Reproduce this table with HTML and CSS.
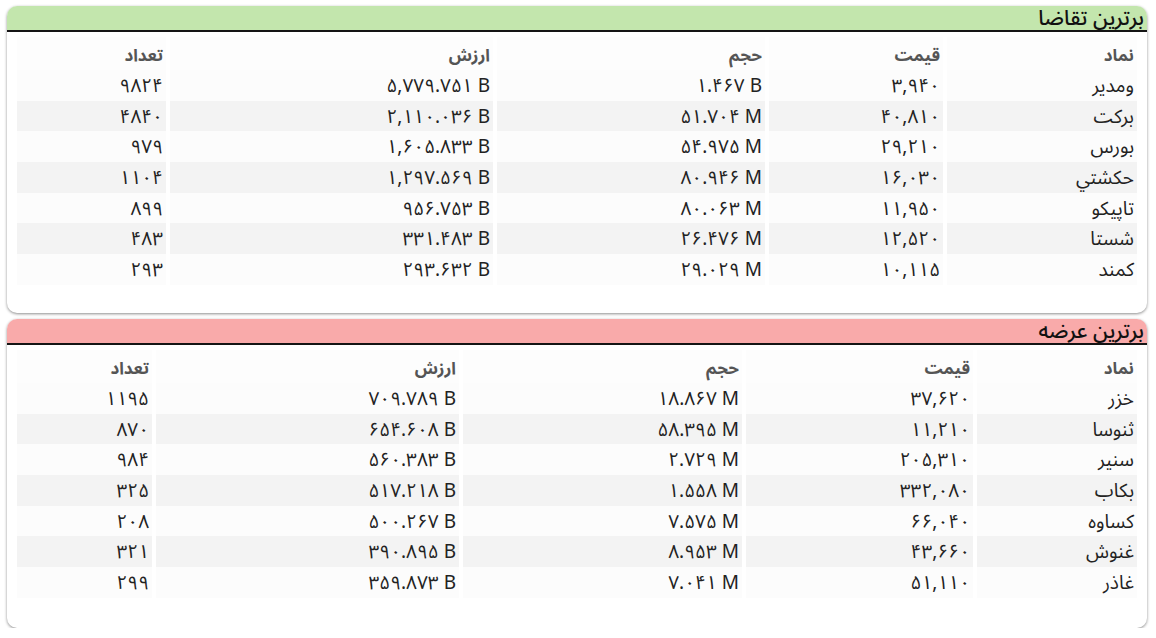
FILE: index.html
```html
<!DOCTYPE html>
<html lang="fa" dir="rtl">
<head>
<meta charset="utf-8">
<title>برترین تقاضا و عرضه</title>
<link rel="stylesheet" href="styles.css">
</head>
<body>
<section class="panel panel-demand">
  <h2 class="panel-title title-green">برترین تقاضا</h2>
  <div class="grid grid-demand">
    <div class="row head"><div>نماد</div><div>قیمت</div><div>حجم</div><div>ارزش</div><div>تعداد</div></div>
    <div class="row"><div>ومدیر</div><div class="n">۳,۹۴۰</div><div class="n">۱.۴۶۷ B</div><div class="n">۵,۷۷۹.۷۵۱ B</div><div class="n">۹۸۲۴</div></div>
    <div class="row alt"><div>برکت</div><div class="n">۴۰,۸۱۰</div><div class="n">۵۱.۷۰۴ M</div><div class="n">۲,۱۱۰.۰۳۶ B</div><div class="n">۴۸۴۰</div></div>
    <div class="row"><div>بورس</div><div class="n">۲۹,۲۱۰</div><div class="n">۵۴.۹۷۵ M</div><div class="n">۱,۶۰۵.۸۳۳ B</div><div class="n">۹۷۹</div></div>
    <div class="row alt"><div>حكشتي</div><div class="n">۱۶,۰۳۰</div><div class="n">۸۰.۹۴۶ M</div><div class="n">۱,۲۹۷.۵۶۹ B</div><div class="n">۱۱۰۴</div></div>
    <div class="row"><div>تاپیکو</div><div class="n">۱۱,۹۵۰</div><div class="n">۸۰.۰۶۳ M</div><div class="n">۹۵۶.۷۵۳ B</div><div class="n">۸۹۹</div></div>
    <div class="row alt"><div>شستا</div><div class="n">۱۲,۵۲۰</div><div class="n">۲۶.۴۷۶ M</div><div class="n">۳۳۱.۴۸۳ B</div><div class="n">۴۸۳</div></div>
    <div class="row"><div>کمند</div><div class="n">۱۰,۱۱۵</div><div class="n">۲۹.۰۲۹ M</div><div class="n">۲۹۳.۶۳۲ B</div><div class="n">۲۹۳</div></div>
  </div>
</section>
<section class="panel panel-supply">
  <h2 class="panel-title title-red">برترین عرضه</h2>
  <div class="grid grid-supply">
    <div class="row head"><div>نماد</div><div>قیمت</div><div>حجم</div><div>ارزش</div><div>تعداد</div></div>
    <div class="row"><div>خزر</div><div class="n">۳۷,۶۲۰</div><div class="n">۱۸.۸۶۷ M</div><div class="n">۷۰۹.۷۸۹ B</div><div class="n">۱۱۹۵</div></div>
    <div class="row alt"><div>ثنوسا</div><div class="n">۱۱,۲۱۰</div><div class="n">۵۸.۳۹۵ M</div><div class="n">۶۵۴.۶۰۸ B</div><div class="n">۸۷۰</div></div>
    <div class="row"><div>سنیر</div><div class="n">۲۰۵,۳۱۰</div><div class="n">۲.۷۲۹ M</div><div class="n">۵۶۰.۳۸۳ B</div><div class="n">۹۸۴</div></div>
    <div class="row alt"><div>بکاب</div><div class="n">۳۳۲,۰۸۰</div><div class="n">۱.۵۵۸ M</div><div class="n">۵۱۷.۲۱۸ B</div><div class="n">۳۲۵</div></div>
    <div class="row"><div>کساوه</div><div class="n">۶۶,۰۴۰</div><div class="n">۷.۵۷۵ M</div><div class="n">۵۰۰.۲۶۷ B</div><div class="n">۲۰۸</div></div>
    <div class="row alt"><div>غنوش</div><div class="n">۴۳,۶۶۰</div><div class="n">۸.۹۵۳ M</div><div class="n">۳۹۰.۸۹۵ B</div><div class="n">۳۲۱</div></div>
    <div class="row"><div>غاذر</div><div class="n">۵۱,۱۱۰</div><div class="n">۷.۰۴۱ M</div><div class="n">۳۵۹.۸۷۳ B</div><div class="n">۲۹۹</div></div>
  </div>
</section>
</body>
</html>
```
FILE: styles.css
```css
html, body {
  margin: 0;
  padding: 0;
  background: #ffffff;
}
body {
  padding: 6px 9px 0 7px;
  font-family: "Noto Sans Arabic", "DejaVu Sans", sans-serif;
  color: #222;
  direction: rtl;
}
.panel {
  background: #fff;
  border-radius: 10px;
  box-shadow: 0 1px 3px rgba(0, 0, 0, 0.45);
  box-sizing: border-box;
}
.panel-demand { height: 307px; }
.panel-supply { height: 309px; margin-top: 6px; }
.panel-title {
  margin: 0;
  height: 24px;
  line-height: 24px;
  font-size: 21px;
  font-weight: 500;
  color: #111;
  padding-right: 3px;
  border-bottom: 2px solid #151515;
  border-radius: 10px 10px 0 0;
  text-align: right;
  white-space: nowrap;
}
.title-green { background: #c3e6ad; }
.title-red { background: #f9aaaa; }
.grid {
  padding: 5px 10px 0 10px;
}
.row {
  display: grid;
  column-gap: 4px;
  height: 30.7px;
  font-size: 19px;
  line-height: 22px;
}
.grid-demand .row { grid-template-columns: 190px 174px 268px 323px 1fr; }
.grid-supply .row { grid-template-columns: 160px 227px 279px 303px 1fr; }
.row > div {
  background: #fcfcfc;
  padding: 1px 3px 0 0;
  display: flex;
  align-items: center;
  justify-content: flex-start;
  white-space: nowrap;
}
.row.alt > div { background: #f3f3f3; }
.row.head { height: 33px; }
.row.head > div {
  color: #555;
  font-weight: bold;
  font-size: 17px;
  padding: 4px 3px 0 0;
  background: #fdfdfd;
}
.row > div.n {
  direction: ltr;
  justify-content: flex-end;
}
```
